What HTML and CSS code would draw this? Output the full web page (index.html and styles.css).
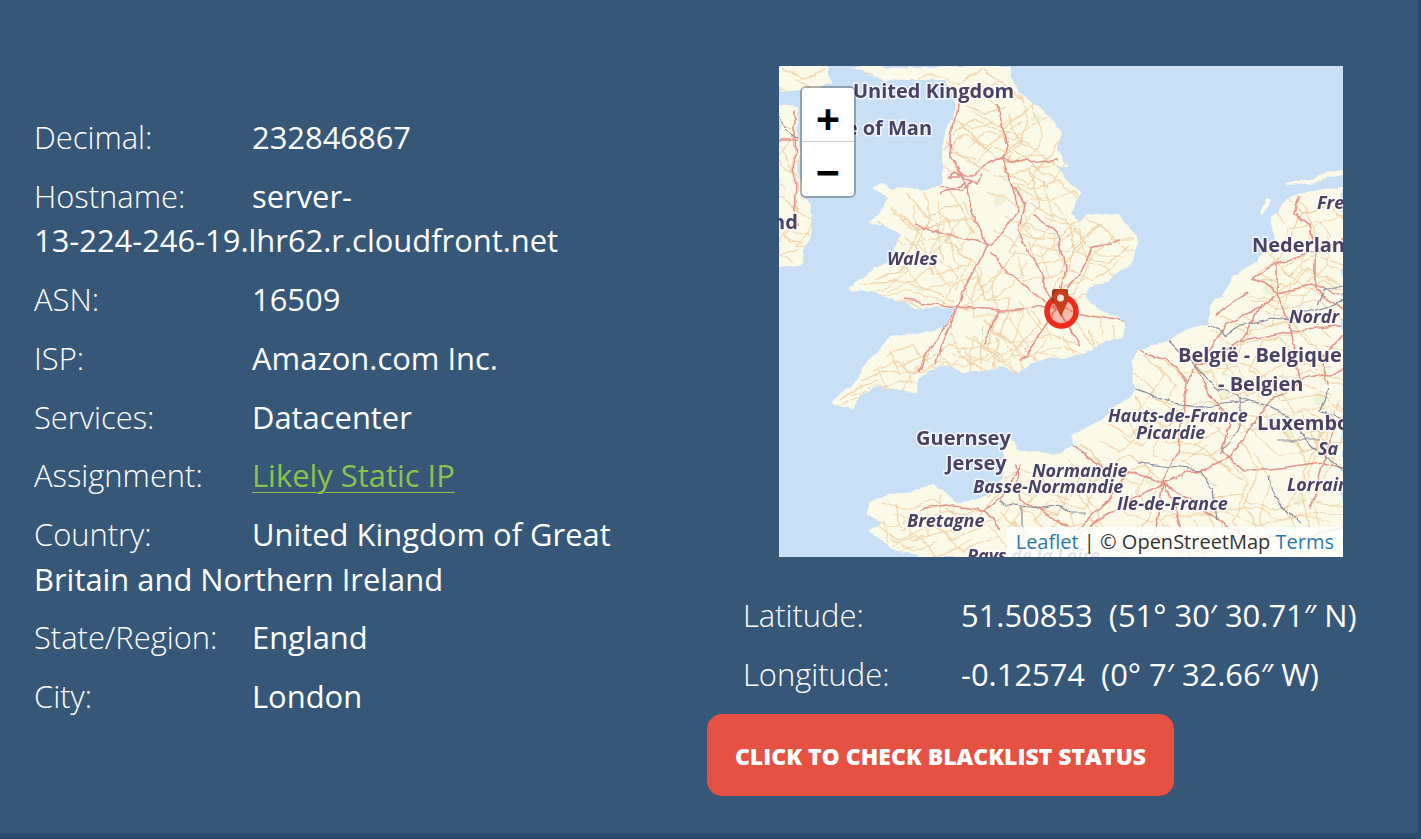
FILE: index.html
```html
<!DOCTYPE html>
<html lang="en">
<head>
<meta charset="utf-8">
<title>IP details</title>
<link rel="stylesheet" href="styles.css">
</head>
<body>
<main class="panel">
  <section class="details">
    <p class="row"><span class="label">Decimal:</span>232846867</p>
    <p class="row"><span class="label">Hostname:</span>server-<span class="nowrap">13-224-246-19.lhr62.r.cloudfront.net</span></p>
    <p class="row"><span class="label">ASN:</span>16509</p>
    <p class="row"><span class="label">ISP:</span>Amazon.com Inc.</p>
    <p class="row"><span class="label">Services:</span>Datacenter</p>
    <p class="row"><span class="label">Assignment:</span><a class="link" href="#">Likely Static IP</a></p>
    <p class="row"><span class="label">Country:</span>United Kingdom of Great Britain and Northern Ireland</p>
    <p class="row"><span class="label">State/Region:</span>England</p>
    <p class="row"><span class="label">City:</span>London</p>
  </section>
  <section class="location">
    <div class="map">
      <svg class="map-art" viewBox="779 66 564 491" width="564" height="491" aria-hidden="true">
        <defs>
          <clipPath id="land-clip">
            <path d="M779 66H828L830 84L800 90L779 92Z"/>
            <path d="M779 105L798 107L800 197L813 207L810 230L803 263L779 267Z"/>
            <path d="M853 66H1010L1017 93L1043 110L1062 132L1057 150L1070 167L1055 167L1080 193L1072 213L1080 223L1090 212L1117 215L1138 237L1133 263L1110 277L1090 290L1086 300L1098 308L1125 320L1123 337L1070 357L1030 362L1020 372L1003 365L983 372L963 372L947 365L927 370L918 380L917 395L903 390L877 388L858 395L855 410L830 405L837 397L857 380L880 347L892 337L933 330L947 323L957 307L913 308L893 297L847 287L870 273L893 257L900 233L870 223L887 197L873 188L885 182L893 190L930 188L940 187L943 177L943 147L952 117L955 97L943 80L905 80L870 78Z"/>
            <path d="M1343 185L1300 192L1290 200L1273 215L1275 240L1257 260L1240 277L1230 287L1217 300L1208 310L1207 323L1183 330L1173 338L1140 350L1133 360L1132 393L1107 417L1070 437L1072 447L1053 455L1020 450L1010 433L1003 463L1000 487L983 497L957 503L933 483L903 493L870 500L870 513L880 523L870 533L893 547L917 557H1343Z"/>
            <path d="M1343 172L1320 176L1285 184L1287 186L1322 180L1343 176Z"/>
            <path d="M1267 195L1262 208L1260 215L1264 214L1270 200Z"/>
            <path d="M1255 262L1238 272L1222 292L1226 295L1245 278Z"/>
          </clipPath>
          <filter id="organic" x="-5%" y="-5%" width="110%" height="110%">
            <feTurbulence type="fractalNoise" baseFrequency="0.05" numOctaves="3" seed="7" result="noise"/>
            <feDisplacementMap in="SourceGraphic" in2="noise" scale="9" xChannelSelector="R" yChannelSelector="G"/>
            <feGaussianBlur stdDeviation="0.6"/>
          </filter>
        </defs>
        <rect x="779" y="66" width="564" height="491" class="sea"/>
        <g class="tiles" filter="url(#organic)">
          <rect x="779" y="66" width="564" height="491" class="land" clip-path="url(#land-clip)"/>
          <g class="roads" clip-path="url(#land-clip)">
            <g class="green">
              <circle cx="1037" cy="118" r="5"/><circle cx="1268" cy="290" r="5"/><circle cx="900" cy="270" r="4"/><circle cx="918" cy="290" r="3"/><circle cx="1225" cy="395" r="5"/><circle cx="1180" cy="440" r="6"/><circle cx="1290" cy="430" r="7"/><circle cx="1150" cy="480" r="4"/><circle cx="1320" cy="400" r="6"/><circle cx="1300" cy="500" r="6"/><circle cx="940" cy="520" r="4"/><circle cx="1000" cy="200" r="5"/><circle cx="1260" cy="300" r="3"/><circle cx="925" cy="355" r="3"/>
            </g>
            <g class="minor" id="minor-net">
              <path d="M860 72L900 90L930 72L960 85L985 70L1010 90M1020 96L1030 125L1015 150L1040 170L1060 140M1035 105L1000 130L975 120L955 135"/>
              <path d="M958 100L985 115L1005 105M960 125L985 150L1005 130L1030 145M952 150L975 160M1005 160L1040 155L1060 170M1000 175L1030 190L1060 180L1078 200"/>
              <path d="M905 195L925 215L960 205L975 235M890 205L915 230L935 225L945 260M925 190L930 215L915 250L935 275L965 265M905 235L920 255L900 270L875 280M860 285L895 280L930 290L955 300"/>
              <path d="M950 190L965 215L945 240L970 260L955 290M975 265L985 300L1010 300L1000 335L1015 360M1030 170L1040 205L1020 235L1055 240L1085 215L1115 240L1135 240"/>
              <path d="M1030 205L1065 220L1075 250L1100 225M1075 250L1105 265L1130 245M1075 250L1060 290L1085 280M1030 240L1035 265L1060 260M1005 215L1030 230M1015 250L1000 275L975 290"/>
              <path d="M985 320L1010 345L1050 335L1080 345M1040 320L1020 345L1035 360M1075 320L1090 345M1100 315L1105 335M1020 300L1040 330"/>
              <path d="M885 355L910 345L925 360L950 345L975 350L1000 340M862 380L885 370L915 375L930 350M890 350L900 375M950 335L970 365M985 325L980 365M840 400L860 385L880 380M965 335L1005 360"/>
              <path d="M1285 190L1300 215L1330 205L1343 220M1300 215L1290 245L1270 255L1290 275L1315 255L1343 265M1315 255L1315 225M1260 280L1290 285L1310 270L1343 285M1290 285L1285 310L1320 300L1343 320M1250 300L1285 310"/>
              <path d="M1220 315L1250 330L1290 320L1310 345L1343 350M1250 330L1235 360L1265 375L1295 360L1343 380M1175 345L1190 360L1225 355L1235 385L1265 375L1280 400L1320 395L1343 410"/>
              <path d="M1145 355L1165 375L1150 395L1175 410L1210 400L1235 420L1265 415L1290 440L1330 430M1135 395L1150 420L1130 435L1110 425M1175 410L1165 440L1195 445L1220 430M1195 445L1230 470"/>
              <path d="M1080 445L1105 465L1130 455L1150 470L1135 495L1160 505L1200 500L1240 495L1270 510L1310 500L1343 505M1085 465L1070 500L1040 490L1020 510L1050 530L1090 520L1120 540L1165 525L1200 540L1240 530L1280 545L1330 530"/>
              <path d="M1240 440L1260 470L1245 505L1260 535M1300 410L1320 450L1300 490L1310 530M1340 400L1320 450M1000 480L1020 470L1045 480M1070 480L1090 515M1150 510L1135 545M1205 505L1220 545"/>
              <path d="M880 503L905 510L935 500L955 515L985 510L1000 490M895 505L900 530L930 520L950 540L985 525M940 495L940 520M875 525L900 540L925 530M1000 510L1030 540L1060 520"/>
              <path d="M782 68L805 80L825 72M779 125L797 130L785 150L797 175M779 160L798 175M779 195L800 210L785 235L803 245M779 220L795 225M779 255L800 250"/>
            </g>
            <use class="minor minor-copy" href="#minor-net" transform="translate(13 11)"/>
            <use class="minor minor-copy" href="#minor-net" transform="translate(-12 16)"/>
            <g class="major">
              <path d="M957 103L952 137L953 157L965 183L970 203L980 230L987 243M997 103L1008 147L1003 157L1012 183L1017 210L993 243L987 243"/>
              <path d="M947 177L973 177L983 167L1003 157L1030 163L1057 160M947 177L955 172L965 180L978 183L982 172M940 188L960 190L973 183"/>
              <path d="M990 253L1010 273L1033 293L1057 307M987 243L980 260L957 307L947 323L943 330L937 340L925 353L918 373M1057 307L1000 310L957 307L903 300M1012 183L1025 205L1018 232L1033 260L1057 307"/>
              <path d="M1057 307L1090 315L1125 320M1057 307L1072 332L1080 345M1057 307L1035 340L1020 360M1057 307L1065 270L1060 240L1035 215M1057 307L1080 270L1095 245L1120 240M1000 310L985 345M957 307L935 365M987 243L945 235L915 225M965 183L940 195"/>
              <path d="M1140 350L1165 360L1187 383L1197 367L1215 355L1240 342L1270 335L1300 330L1343 325M1187 383L1183 410L1177 453L1163 483M1197 367L1210 395L1230 420L1222 450L1230 458L1243 470L1273 470L1323 463L1343 468"/>
              <path d="M1163 483L1127 470L1095 462L1072 447M1163 483L1230 458M1163 483L1158 515L1150 540L1140 557M1163 483L1175 510L1190 557M1163 483L1115 510L1075 535M1163 483L1205 510L1240 535L1290 540L1343 530M1127 470L1110 500L1075 530L1020 500L1015 465M1343 370L1300 380L1270 400L1230 458"/>
              <path d="M1277 263L1253 277L1277 293L1260 307L1240 342M1277 263L1315 250L1343 240M1277 293L1310 285L1343 295M1277 293L1290 330L1300 380M1277 263L1277 293M1300 195L1293 215L1310 225L1315 250L1315 290L1343 310M1250 290L1215 315M1260 307L1225 325L1197 367"/>
              <path d="M1343 335L1320 360L1330 385M1343 420L1325 445L1323 463L1310 510M920 510L945 505L985 510L1003 495L1020 465M1000 530L985 510M779 140L798 140M795 110L796 225"/>
            </g>
            <g class="borders">
              <path d="M779 115L785 130L798 138L800 138"/>
              <path d="M1170 340L1200 370L1217 387L1240 397L1263 403L1295 420L1310 445L1343 470M1240 397L1240 427L1220 453"/>
              <path d="M1133 390L1173 403L1200 408L1250 400M1137 463L1173 467L1200 470L1213 490L1217 520M1270 477L1275 497L1300 523M1277 440L1320 440M1330 387L1320 410L1343 420"/>
              <path d="M1000 500L1005 505L1022 507L1022 545M1022 507L1045 510L1060 507L1070 515L1085 515M1207 325L1225 335L1240 325L1265 320L1272 318L1290 320L1315 310L1343 300M1343 285L1325 290L1318 305"/>
            </g>
          </g>
        </g>
        <g class="places">
          <text x="853" y="98">United Kingdom</text>
          <text x="823" y="135">Isle of Man</text>
          <text x="772" y="229">nd</text>
          <text x="1252" y="252">Nederlan</text>
          <text x="1178" y="362">België - Belgique</text>
          <text x="1218" y="391">- Belgien</text>
          <text x="1257" y="430">Luxembo</text>
          <text x="916" y="445">Guernsey</text>
          <text x="946" y="470">Jersey</text>
        </g>
        <g class="regions">
          <text x="887" y="265">Wales</text>
          <text x="1317" y="209">Fre</text>
          <text x="1289" y="323">Nordr</text>
          <text x="1108" y="422">Hauts-de-France</text>
          <text x="1136" y="439">Picardie</text>
          <text x="1318" y="455">Sa</text>
          <text x="1032" y="477">Normandie</text>
          <text x="973" y="493">Basse-Normandie</text>
          <text x="1117" y="510">Ile-de-France</text>
          <text x="1287" y="491">Lorrain</text>
          <text x="907" y="527">Bretagne</text>
          <text x="967" y="562">Pays de la Loire</text>
        </g>
        <g class="marker">
          <circle cx="1061.500" cy="311.500" r="14.500" class="marker-ring"/>
          <path class="marker-tag" d="M1052 292a3 3 0 0 1 3-3h10a3 3 0 0 1 3 3v9l-5 6h-6l-5-6z"/>
          <path class="marker-pin" d="M1053 297a8 8 0 0 1 16 0c0 4-5 12-8 20c-3-8-8-16-8-20z"/>
          <circle cx="1060.500" cy="298" r="3.500" class="marker-dot"/>
        </g>
      </svg>
      <div class="zoom-control">
        <button class="zoom-btn" type="button">+</button>
        <button class="zoom-btn" type="button">−</button>
      </div>
      <div class="attribution"><a href="#">Leaflet</a> | © OpenStreetMap <a href="#">Terms</a></div>
    </div>
    <div class="coords">
      <p class="coord"><span class="coord-label">Latitude:</span>51.50853&nbsp; (51° 30′ 30.71″ N)</p>
      <p class="coord"><span class="coord-label">Longitude:</span>-0.12574&nbsp; (0° 7′ 32.66″ W)</p>
    </div>
    <a class="check" href="#">Click to check blacklist status</a>
  </section>
</main>
</body>
</html>
```
FILE: styles.css
```css
* { box-sizing: border-box; }
html, body { margin: 0; height: 100%; }
body {
  background: #2a4a6e;
  font-family: "Open Sans", sans-serif;
  color: #fff;
  overflow: hidden;
}
.panel {
  width: 1418px;
  height: 833px;
  background: #375779;
  display: flex;
  padding: 66px 0 0 34px;
}
.details { width: 673px; padding-top: 49px; }
.row {
  margin: 0 0 13.900px;
  width: 590px;
  font-size: 30.900px;
  line-height: 44.800px;
  font-weight: 400;
}
.nowrap { white-space: nowrap; }
.label {
  display: inline-block;
  width: 218px;
  font-weight: 300;
}
.link { color: #8bc34a; text-decoration: underline; text-decoration-thickness: 1px; text-underline-offset: 5px; }
.location { width: 700px; }
.map {
  position: relative;
  width: 564px;
  height: 491px;
  margin-left: 72px;
  overflow: hidden;
}
.map-art { display: block; }
.sea { fill: #c9dff5; }
.land { fill: #fbfae8; }
.green circle { fill: #eef3d8; }
.minor path { fill: none; stroke: #efcfa8; stroke-width: 1.100; }
.minor-copy { opacity: .85; }
.major path { fill: none; stroke: #e5928a; stroke-width: 1.600; }
.borders path { fill: none; stroke: #8a8a9c; stroke-width: 1.200; }
.places, .regions { filter: blur(0.35px); }
.places text, .regions text {
  font-family: "Open Sans", sans-serif;
  font-weight: 700;
  fill: #4a4264;
  paint-order: stroke;
  stroke: rgba(255,255,255,.75);
  stroke-width: 3px;
}
.places text { font-size: 20px; }
.regions text { font-size: 18px; font-style: italic; }
.marker { filter: blur(0.4px); }
.marker-ring { fill: rgba(234,45,30,.3); stroke: #ee2a1c; stroke-width: 5.500; }
.marker-tag { fill: #96321a; }
.marker-pin { fill: #c63f1c; }
.marker-dot { fill: #f6e6e0; }
.zoom-control {
  position: absolute;
  left: 21px;
  top: 20px;
  width: 56px;
  border: 2px solid rgba(0,0,0,.28);
  border-radius: 6px;
  display: flex;
  flex-direction: column;
}
.zoom-btn {
  height: 54px;
  background: #fff;
  border: 0;
  border-bottom: 1px solid #ccc;
  border-radius: 4px 4px 0 0;
  padding: 8px 0 0;
  font: 700 41px/46px "Liberation Sans", Arial, sans-serif;
  color: #000;
}
.zoom-btn:last-child { border-bottom: 0; border-radius: 0 0 4px 4px; }
.attribution {
  position: absolute;
  right: 0;
  bottom: 0;
  height: 30px;
  padding: 0 9px;
  background: rgba(255,255,255,.85);
  font-size: 20px;
  line-height: 30px;
  color: #333;
}
.attribution a { color: #2a7aa8; text-decoration: none; }
.coords { margin-left: 36px; padding-top: 36px; }
.coord {
  margin: 0 0 14px;
  font-size: 30.900px;
  line-height: 45px;
  white-space: nowrap;
}
.coord-label { display: inline-block; width: 218px; font-weight: 300; }
.check {
  display: inline-block;
  height: 82px;
  width: 467px;
  background: #e55244;
  border-radius: 15px;
  font-size: 23px;
  font-weight: 800;
  line-height: 84px;
  text-align: center;
  text-transform: uppercase;
  color: #fff;
  text-decoration: none;
  margin-top: 3px;
}
```
